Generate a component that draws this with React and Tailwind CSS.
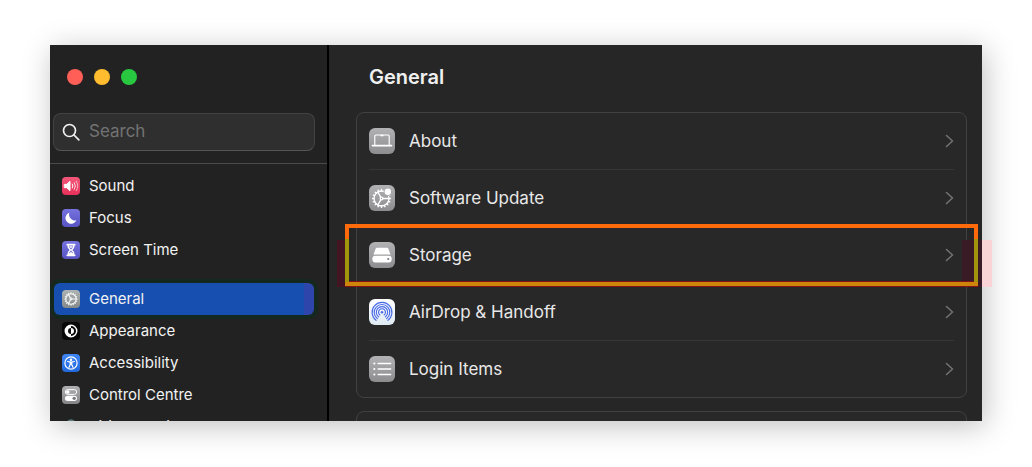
import React, { useState } from 'react';

const Gear = ({ cx = 12, cy = 12, r = 8, stroke = 1.6 }) => {
  const teeth = Array.from({ length: 16 }, (_, i) => (i * Math.PI) / 8);
  return (
    <g fill="none" stroke="#fff" strokeWidth={stroke} strokeLinecap="round">
      <circle cx={cx} cy={cy} r={r} />
      {teeth.map((a, i) => (
        <line
          key={i}
          x1={cx + r * Math.cos(a)}
          y1={cy + r * Math.sin(a)}
          x2={cx + (r + 1.5) * Math.cos(a)}
          y2={cy + (r + 1.5) * Math.sin(a)}
        />
      ))}
      <circle cx={cx} cy={cy} r={r * 0.18} />
      {[0, 120, 240].map((deg) => (
        <line
          key={deg}
          x1={cx + r * 0.25 * Math.cos((deg * Math.PI) / 180)}
          y1={cy + r * 0.25 * Math.sin((deg * Math.PI) / 180)}
          x2={cx + r * Math.cos((deg * Math.PI) / 180)}
          y2={cy + r * Math.sin((deg * Math.PI) / 180)}
        />
      ))}
    </g>
  );
};

// All glyphs are drawn on a 27x27 grid
const glyphs = {
  sound: (
    <g fill="none" stroke="#fff" strokeWidth="1.5" strokeLinecap="round">
      <path d="M4 11h3l5-4.500v14L7 16H4z" fill="#fff" strokeLinejoin="round" />
      <path d="M15.500 10.500q2 3 0 6" />
      <path d="M18.500 8.500q3.500 5 0 10" opacity=".8" />
      <path d="M21.500 6.500q4.500 7 0 14" opacity=".6" />
    </g>
  ),
  focus: <path d="M11 5.500A8.500 8.500 0 1 0 21.500 17 9 9 0 0 1 11 5.500z" fill="#fff" />,
  screenTime: (
    <g fill="none" stroke="#fff" strokeWidth="2.200" strokeLinecap="round" strokeLinejoin="round">
      <path d="M8 5.500h11M8 21.500h11" strokeWidth="2.800" />
      <path d="M9.500 6v3c0 2 3 3 3 4.500s-3 2.500-3 4.500v3M17.500 6v3c0 2-3 3-3 4.500s3 2.500 3 4.500v3" />
      <path d="M11 20l2.500-2.500L16 20zM12 9h3" fill="#fff" />
    </g>
  ),
  general: (
    <g opacity=".9">
      <Gear cx={13.5} cy={13.5} r={7.8} stroke={1.6} />
    </g>
  ),
  appearance: (
    <g>
      <circle cx="13.5" cy="13.5" r="8.600" fill="none" stroke="#fff" strokeWidth="2.200" />
      <path d="M13.500 5a8.500 8.500 0 0 0 0 17z" fill="#fff" />
      <path d="M13.500 9a4.500 4.500 0 0 0 0 9z" fill="#111" />
      <path d="M13.500 9a4.500 4.500 0 0 1 0 9z" fill="#fff" />
    </g>
  ),
  accessibility: (
    <g fill="none" stroke="#fff" strokeWidth="1.800" strokeLinecap="round" strokeLinejoin="round">
      <circle cx="13.5" cy="13.5" r="9.200" />
      <circle cx="13.5" cy="8.500" r="1" fill="#fff" />
      <path d="M8.500 11.300l5 1 5-1M13.500 12.300v3.200M12.300 12.500v3.500l-1.800 4M14.700 12.500v3.500l1.800 4" />
    </g>
  ),
  controlCentre: (
    <g>
      <rect x="5" y="5.500" width="17" height="7" rx="3.500" fill="none" stroke="#fff" strokeWidth="1.500" />
      <circle cx="8.700" cy="9" r="2.600" fill="#fff" />
      <rect x="4.500" y="14.500" width="18" height="8" rx="4" fill="#fff" />
      <circle cx="18.300" cy="18.500" r="2.500" fill="#777" />
    </g>
  ),
  siri: <circle cx="13.5" cy="10" r="8" fill="#56797c" />,
  about: (
    <g fill="none" stroke="#fff" strokeWidth="1.200" strokeLinejoin="round">
      <path d="M6 18V8.500q0-1.200 1.200-1.200h12.600q1.200 0 1.200 1.200V18" />
      <path d="M12 7.700h3" strokeWidth="1.600" />
      <path d="M3.500 18.300h20" strokeWidth="1.700" strokeLinecap="round" />
    </g>
  ),
  softwareUpdate: (
    <g>
      <Gear cx={13} cy={14} r={7.8} stroke={1.4} />
      <circle cx="19.500" cy="7" r="4.300" fill="#a8a8ab" />
      <circle cx="19.500" cy="7" r="3.300" fill="#fff" />
    </g>
  ),
  storage: (
    <g fill="#fff">
      <path d="M8.300 6h10.400q1 0 1.400 1l2.300 6.300q-.6-.3-1.600-.3H6.200q-1 0-1.600.3L6.900 7q.4-1 1.400-1z" />
      <rect x="3.500" y="14.200" width="20" height="7" rx="3" />
      <circle cx="20" cy="17.700" r="1.100" fill="#77777a" />
    </g>
  ),
  airdrop: (
    <g fill="none" stroke="#4a6be8" strokeWidth="1.200" strokeLinecap="round">
      <circle cx="13.5" cy="13.8" r="1.300" fill="#4a6be8" stroke="none" />
      <path d="M11.300 16.600a3.600 3.600 0 1 1 4.400 0" />
      <path d="M9.900 18.500a5.900 5.900 0 1 1 7.200 0" />
      <path d="M8.600 20.300a8.100 8.100 0 1 1 9.800 0" />
      <path d="M7.300 22.100a10.300 10.300 0 1 1 12.400 0" />
    </g>
  ),
  loginItems: (
    <g stroke="#fff" strokeWidth="1.500" strokeLinecap="round">
      <path d="M9.500 7.800h13M9.500 13.500h13M9.500 19.200h13" />
      <path d="M5.500 7.800h.1M5.500 13.500h.1M5.500 19.200h.1" strokeWidth="2.200" />
    </g>
  ),
};

const sidebarGroups = [
  [
    { label: 'Sound', icon: 'sound', color: 'bg-linear-to-b from-[#f2577a] to-[#e8305a]' },
    { label: 'Focus', icon: 'focus', color: 'bg-linear-to-b from-[#7673df] to-[#5753c4]' },
    { label: 'Screen Time', icon: 'screenTime', color: 'bg-linear-to-b from-[#7673df] to-[#5753c4]' },
  ],
  [
    { label: 'General', icon: 'general', color: 'bg-linear-to-b from-[#aeb3b3] to-[#84898a]' },
    { label: 'Appearance', icon: 'appearance', color: 'bg-[#080808]' },
    { label: 'Accessibility', icon: 'accessibility', color: 'bg-linear-to-b from-[#3f86f5] to-[#2168dc]' },
    { label: 'Control Centre', icon: 'controlCentre', color: 'bg-linear-to-b from-[#b0b0b2] to-[#858587]' },
    { label: 'Siri & Spotlight', icon: 'siri', color: 'bg-transparent' },
  ],
];

const settings = [
  { label: 'About', icon: 'about', color: 'bg-linear-to-b from-[#b2b2b5] to-[#8d8d90]' },
  { label: 'Software Update', icon: 'softwareUpdate', color: 'bg-linear-to-b from-[#b2b2b5] to-[#8d8d90]' },
  { label: 'Storage', icon: 'storage', color: 'bg-linear-to-b from-[#b2b2b5] to-[#8d8d90]', highlighted: true },
  { label: 'AirDrop & Handoff', icon: 'airdrop', color: 'bg-linear-to-b from-[#ffffff] to-[#dfeaf2]' },
  { label: 'Login Items', icon: 'loginItems', color: 'bg-linear-to-b from-[#b2b2b5] to-[#8d8d90]' },
];

function Icon({ name, className }) {
  return (
    <span className={`shrink-0 overflow-hidden ${className}`}>
      <svg viewBox="0 0 27 27" className="block w-full h-full" aria-hidden="true">
        {glyphs[name]}
      </svg>
    </span>
  );
}

function Highlight() {
  return (
    <span className="absolute -inset-x-6 -top-[3px] -bottom-[3px] pointer-events-none">
      <span className="absolute -left-2 top-4 -bottom-px w-2 bg-[#431522]" />
      <span className="absolute right-0 top-4 -bottom-px w-4 bg-[#381b24]" />
      <span className="absolute -right-1 top-4 -bottom-px w-1 bg-[#381b24]" />
      <span className="absolute -right-[14px] top-4 -bottom-px w-[10px] bg-[#f9d3d6]" />
      <span className="absolute inset-x-0 -bottom-px h-[6px] bg-[#861313]" />
      <span className="absolute left-0 inset-y-0 w-1 bg-linear-to-b from-[#ff6b0a] from-25% to-[#a2950c] to-25%" />
      <span className="absolute right-0 inset-y-0 w-1 bg-linear-to-b from-[#ff6b0a] from-25% to-[#a2950c] to-25%" />
      <span className="absolute inset-x-0 top-0 h-1 bg-[#ff6b0a]" />
      <span className="absolute inset-x-0 bottom-0 h-1 bg-[#cf850b]" />
    </span>
  );
}

export default function App() {
  const [selected, setSelected] = useState('General');
  const [query, setQuery] = useState('');

  return (
    <div className="h-screen overflow-hidden bg-white px-[50px] pt-[45px] pb-[46px] font-['Inter','Liberation_Sans',sans-serif]">
      <div className="flex h-full overflow-y-clip bg-[#262626] text-[#e8e8e8] shadow-[3px_5px_28px_rgba(0,0,0,0.25)]">
        {/* Sidebar */}
        <aside className="flex flex-col w-[279px] shrink-0 bg-[#222222] border-r-2 border-black">
          <div className="flex gap-[11px] pt-6 pl-[17px]">
            <button aria-label="Close" className="size-4 rounded-full bg-[#ff5f57]" />
            <button aria-label="Minimise" className="size-4 rounded-full bg-[#febc2e]" />
            <button aria-label="Zoom" className="size-4 rounded-full bg-[#28c840]" />
          </div>

          <label className="flex items-center h-[38px] mt-7 mb-3 ml-[3px] mr-3 px-2 gap-[9px] rounded-lg bg-[#2f2f2f] border border-[#434343] border-b-[#555555]">
            <svg viewBox="0 0 18 18" className="size-[18px] shrink-0" fill="none" stroke="#f2f2f2" strokeWidth="1.7" strokeLinecap="round" aria-hidden="true">
              <circle cx="7.500" cy="7.500" r="6" />
              <path d="M12 12l4.800 4.800" />
            </svg>
            <input
              type="text"
              aria-label="Search"
              placeholder="Search"
              value={query}
              onChange={(e) => setQuery(e.target.value)}
              className="w-full min-w-0 bg-transparent text-[17px] outline-none placeholder:text-[#737373]"
            />
          </label>

          <nav className="flex flex-col flex-1 min-h-0 gap-[17px] pt-[6px] pl-1 pr-[13px] border-t border-[#4a4a4a]">
            {sidebarGroups.map((group, i) => (
              <div key={i} className="shrink-0">
                {group.map((item) => (
                  <button
                    key={item.label}
                    onClick={() => setSelected(item.label)}
                    className={`flex items-center w-full h-8 px-2 gap-[9px] rounded-md text-[15px] text-left text-[#f2f2f2] ${
                      selected === item.label
                        ? 'bg-linear-to-r from-[#174fb0] from-96% to-[#2e45ab] to-96% ring-4 ring-[#14281f]'
                        : ''
                    }`}
                  >
                    <Icon name={item.icon} className={`size-[18px] rounded-sm ${item.color}`} />
                    {item.label}
                  </button>
                ))}
              </div>
            ))}
          </nav>
        </aside>

        {/* Content */}
        <main className="flex-1 min-w-0 pt-[18px] pl-[27px] pr-[15px]">
          <h1 className="ml-[13px] mb-[21px] text-xl leading-7 font-semibold text-[#f0f0f0]">General</h1>

          <ul className="px-3 rounded-lg border border-[#414141] bg-[#282828] divide-y divide-[#363636]">
            {settings.map((item) => (
              <li key={item.label} className="relative">
                <button className="flex items-center w-full h-14 gap-[14px] text-[17px] text-left">
                  <Icon name={item.icon} className={`size-[26px] rounded-md ${item.color}`} />
                  <span className="flex-1 pt-0.5">{item.label}</span>
                  <svg viewBox="0 0 9 14" className="w-[9px] h-[14px]" fill="none" stroke="#727272" strokeWidth="1.600" strokeLinecap="round" strokeLinejoin="round" aria-hidden="true">
                    <path d="M1.500 1.500L7.500 7l-6 5.500" />
                  </svg>
                </button>
                {item.highlighted && <Highlight />}
              </li>
            ))}
          </ul>

          <div className="h-14 mt-[13px] rounded-lg border border-[#414141] bg-[#282828]" />
        </main>
      </div>
    </div>
  );
}
